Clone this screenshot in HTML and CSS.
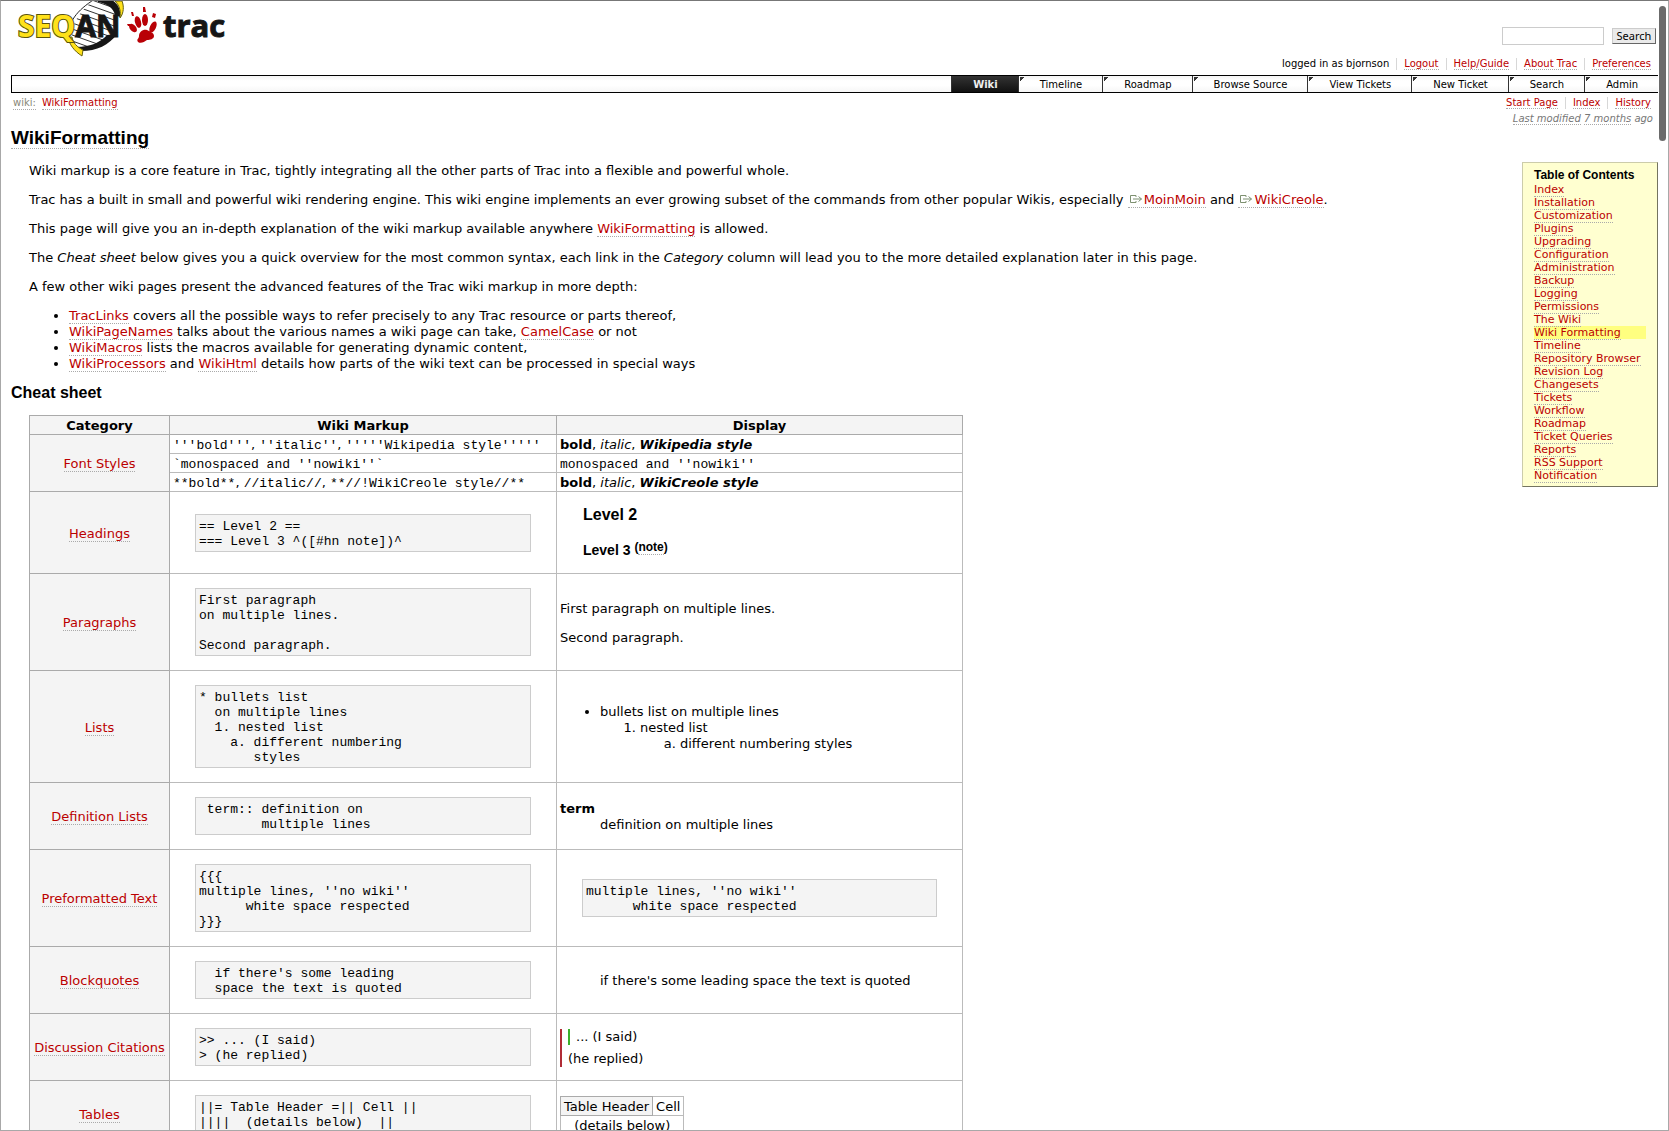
FILE: index.html
```html
<!DOCTYPE html>
<html lang="en">
<head>
<meta charset="utf-8">
<title>WikiFormatting – SeqAn</title>
<link rel="stylesheet" href="styles.css">
</head>
<body>
<div class="window">
  <div class="scrollbar" aria-hidden="true"></div>
  <header class="banner">
    <a class="logo" href="#" aria-label="SeqAn Trac home">
      <svg width="220" height="58" viewBox="0 0 220 58">
        <defs>
          <clipPath id="helix"><path d="M84 -2H104C108 8 106 28 100 38C92 46 80 48 68 46C56 40 58 18 84 -2Z"/></clipPath>
        </defs>
        <g clip-path="url(#helix)" stroke="#333" stroke-width="1" fill="none">
          <path d="M50 -12L120 13M50 -6L120 19M50 0L120 25M50 6L120 31M50 12L120 37M50 18L120 43M50 24L120 49M50 30L120 55M50 36L120 61"/>
        </g>
        <path d="M84 -2C66 9 56 22 58 36" fill="none" stroke="#222" stroke-width="1"/>
        <path d="M87 -1L101 -1C107 3 110 8 109 16L104 14C102 6 96 3 87 1Z" fill="#161616"/>
        <path d="M106 33C98 44 86 50 70 50L65 46C80 46 90 41 96 34Z" fill="#161616"/>
        <path d="M104 0C109 5 110 11 109 17C113 12 113 5 111 0Z" fill="#ffe11a" stroke="#66600c"/>
        <path d="M57 36C58 43 63 50 71 55L72 49C66 46 62 42 61 36Z" fill="#ffe11a" stroke="#66600c"/>
        <text class="logo-name" x="7" y="36"><tspan class="logo-seq">SEQ</tspan><tspan class="logo-an">AN</tspan></text>
        <g fill="#b90006">
          <path d="M128 35C128 31 132 28 136 29C140 31 143 32 143 35C143 38 139 39 136 39C133 41 130 43 127 41C125 38 128 38 128 35Z"/>
          <ellipse cx="122" cy="27" rx="3" ry="5" transform="rotate(-40 122 27)"/>
          <ellipse cx="127" cy="21" rx="3" ry="6" transform="rotate(-15 127 21)"/>
          <ellipse cx="134" cy="19" rx="3" ry="6"/>
          <ellipse cx="142" cy="26" rx="3" ry="6" transform="rotate(25 142 26)"/>
          <path d="M120 11l2 0 1 4-2 0zM132 6l2 0 1 5-3 0zM142 12l3 1-1 4-3-1zM116 23l3 0 0 2-2 0z"/>
        </g>
        <text class="logo-trac" x="152" y="36">trac</text>
      </svg>
    </a>
    <div class="tools">
      <form class="search" action="#">
        <input type="text" class="search-field" aria-label="Search this site">
        <button type="button" class="search-button">Search</button>
      </form>
      <ul class="links">
        <li>logged in as bjornson</li>
        <li><a href="#">Logout</a></li>
        <li><a href="#">Help/Guide</a></li>
        <li><a href="#">About Trac</a></li>
        <li><a href="#">Preferences</a></li>
      </ul>
    </div>
  </header>

  <nav class="mainnav">
    <a class="tab active" href="#">Wiki</a>
    <a class="tab" href="#">Timeline</a>
    <a class="tab" href="#">Roadmap</a>
    <a class="tab" href="#">Browse Source</a>
    <a class="tab" href="#">View Tickets</a>
    <a class="tab" href="#">New Ticket</a>
    <a class="tab" href="#">Search</a>
    <a class="tab" href="#">Admin</a>
  </nav>

  <div class="context">
    <div class="path"><a class="muted" href="#">wiki:</a> <a href="#">WikiFormatting</a></div>
    <div class="context-side">
      <ul class="links">
        <li><a href="#">Start Page</a></li>
        <li><a href="#">Index</a></li>
        <li><a href="#">History</a></li>
      </ul>
      <div class="modified"><a href="#">Last modified</a> <a href="#">7 months</a> ago</div>
    </div>
  </div>

  <h1><a class="plain" href="#">WikiFormatting</a></h1>

  <div class="body">
    <main class="wiki">
      <div class="text">
        <p>Wiki markup is a core feature in Trac, tightly integrating all the other parts of Trac into a flexible and powerful whole.</p>
        <p>Trac has a built in small and powerful wiki rendering engine. This wiki engine implements an ever growing subset of the commands from other popular Wikis, especially <a href="#"><svg class="ext" width="15" height="10" viewBox="0 0 15 10"><path d="M8 1.500H2.500V8.500H8V7M8 3V1.500M5 5H13.500M10.500 2.500L13.500 5L10.500 7.500" fill="none" stroke="#7d9070"/></svg>MoinMoin</a> and <a href="#"><svg class="ext" width="15" height="10" viewBox="0 0 15 10"><path d="M8 1.500H2.500V8.500H8V7M8 3V1.500M5 5H13.500M10.500 2.500L13.500 5L10.500 7.500" fill="none" stroke="#7d9070"/></svg>WikiCreole</a>.</p>
        <p>This page will give you an in-depth explanation of the wiki markup available anywhere <a href="#">WikiFormatting</a> is allowed.</p>
        <p>The <em>Cheat sheet</em> below gives you a quick overview for the most common syntax, each link in the <em>Category</em> column will lead you to the more detailed explanation later in this page.</p>
        <p>A few other wiki pages present the advanced features of the Trac wiki markup in more depth:</p>
        <ul>
          <li><a href="#">TracLinks</a> covers all the possible ways to refer precisely to any Trac resource or parts thereof,</li>
          <li><a href="#">WikiPageNames</a> talks about the various names a wiki page can take, <a href="#">CamelCase</a> or not</li>
          <li><a href="#">WikiMacros</a> lists the macros available for generating dynamic content,</li>
          <li><a href="#">WikiProcessors</a> and <a href="#">WikiHtml</a> details how parts of the wiki text can be processed in special ways</li>
        </ul>
      </div>
      <h2>Cheat sheet</h2>
      <table class="sheet">
        <colgroup><col class="col-category"><col class="col-markup"><col class="col-display"></colgroup>
        <thead>
          <tr><th scope="col">Category</th><th scope="col">Wiki Markup</th><th scope="col">Display</th></tr>
        </thead>
        <tbody>
          <tr>
            <th class="category" scope="row" rowspan="3"><a href="#">Font Styles</a></th>
            <td><code>'''bold'''</code>, <code>''italic''</code>, <code>'''''Wikipedia style'''''</code></td>
            <td><strong>bold</strong>, <em>italic</em>, <strong><em>Wikipedia style</em></strong></td>
          </tr>
          <tr>
            <td><code>`monospaced and ''nowiki''`</code></td>
            <td><code>monospaced and ''nowiki''</code></td>
          </tr>
          <tr>
            <td><code>**bold**</code>, <code>//italic//</code>, <code>**//!WikiCreole style//**</code></td>
            <td><strong>bold</strong>, <em>italic</em>, <strong><em>WikiCreole style</em></strong></td>
          </tr>
          <tr>
            <th class="category" scope="row"><a href="#">Headings</a></th>
            <td><pre>== Level 2 ==
=== Level 3 ^([#hn note])^</pre></td>
            <td><div class="sample-headings"><h2>Level 2</h2><h3>Level 3 <sup>(<a class="plain" href="#">note</a>)</sup></h3></div></td>
          </tr>
          <tr>
            <th class="category" scope="row"><a href="#">Paragraphs</a></th>
            <td><pre>First paragraph
on multiple lines.

Second paragraph.</pre></td>
            <td><p>First paragraph on multiple lines.</p><p>Second paragraph.</p></td>
          </tr>
          <tr>
            <th class="category" scope="row"><a href="#">Lists</a></th>
            <td><pre>* bullets list
  on multiple lines
  1. nested list
    a. different numbering
       styles</pre></td>
            <td><ul><li>bullets list on multiple lines<ol><li>nested list<ol class="alpha"><li>different numbering styles</li></ol></li></ol></li></ul></td>
          </tr>
          <tr>
            <th class="category" scope="row"><a href="#">Definition Lists</a></th>
            <td><pre> term:: definition on
        multiple lines</pre></td>
            <td><dl><dt>term</dt><dd>definition on multiple lines</dd></dl></td>
          </tr>
          <tr>
            <th class="category" scope="row"><a href="#">Preformatted Text</a></th>
            <td><pre>{{{
multiple lines, ''no wiki''
      white space respected
}}}</pre></td>
            <td><pre>multiple lines, ''no wiki''
      white space respected</pre></td>
          </tr>
          <tr>
            <th class="category" scope="row"><a href="#">Blockquotes</a></th>
            <td><pre>  if there's some leading
  space the text is quoted</pre></td>
            <td><blockquote>if there's some leading space the text is quoted</blockquote></td>
          </tr>
          <tr>
            <th class="category" scope="row"><a href="#">Discussion Citations</a></th>
            <td><pre>&gt;&gt; ... (I said)
&gt; (he replied)</pre></td>
            <td><blockquote class="citation"><blockquote class="citation inner">... (I said)</blockquote>(he replied)</blockquote></td>
          </tr>
          <tr>
            <th class="category" scope="row"><a href="#">Tables</a></th>
            <td><pre>||= Table Header =|| Cell ||
||||  (details below)  ||</pre></td>
            <td><table class="sample-table"><tr><th scope="col">Table Header</th><td>Cell</td></tr><tr><td colspan="2">(details below)</td></tr></table></td>
          </tr>
        </tbody>
      </table>
    </main>

    <aside class="toc">
      <h4>Table of Contents</h4>
      <ul>
        <li><a href="#">Index</a></li>
        <li><a href="#">Installation</a></li>
        <li><a href="#">Customization</a></li>
        <li><a href="#">Plugins</a></li>
        <li><a href="#">Upgrading</a></li>
        <li><a href="#">Configuration</a></li>
        <li><a href="#">Administration</a></li>
        <li><a href="#">Backup</a></li>
        <li><a href="#">Logging</a></li>
        <li><a href="#">Permissions</a></li>
        <li><a href="#">The Wiki</a></li>
        <li class="current"><a href="#">Wiki Formatting</a></li>
        <li><a href="#">Timeline</a></li>
        <li><a href="#">Repository Browser</a></li>
        <li><a href="#">Revision Log</a></li>
        <li><a href="#">Changesets</a></li>
        <li><a href="#">Tickets</a></li>
        <li><a href="#">Workflow</a></li>
        <li><a href="#">Roadmap</a></li>
        <li><a href="#">Ticket Queries</a></li>
        <li><a href="#">Reports</a></li>
        <li><a href="#">RSS Support</a></li>
        <li><a href="#">Notification</a></li>
      </ul>
    </aside>
  </div>
</div>
</body>
</html>
```
FILE: styles.css
```css
* { box-sizing: border-box; }

body {
  margin: 0;
  background: #fff;
  color: #000;
  font: 13px/16px Verdana, "DejaVu Sans", sans-serif;
}

.window {
  position: relative;
  height: 100vh;
  overflow: hidden;
  padding: 0 10px;
  border: 1px solid #a8a8a8;
  border-top-color: #777;
}

.scrollbar {
  position: absolute;
  top: 5px;
  right: 2px;
  width: 7px;
  height: 135px;
  border-radius: 4px;
  background: #6b6b6b;
}

a {
  color: #b00;
  text-decoration: none;
  border-bottom: 1px dotted #aaa;
}

a.plain { color: inherit; }
a.muted { color: #888877; }

ul, ol, dl, p, h1, h2, h3, h4, pre, blockquote { margin: 0; padding: 0; }

h1, h2, h3, h4 { font-family: Arial, "Liberation Sans", sans-serif; font-weight: bold; }

/* Header */
.banner {
  display: flex;
  justify-content: space-between;
  height: 74px;
}

.logo { border: 0; }
.logo svg { display: block; }
.logo-name { font: bold 30px "Open Sans", sans-serif; }
.logo-seq { fill: #ffe11a; stroke: #5a540c; stroke-width: 2px; paint-order: stroke; }
.logo-an { fill: #161616; stroke: #161616; stroke-width: 1px; }
.logo-trac { font: bold 31px "Open Sans", sans-serif; fill: #161616; stroke: #161616; stroke-width: 1px; }

.tools {
  display: flex;
  flex-direction: column;
  align-items: flex-end;
  padding-top: 26px;
}

.search {
  display: flex;
  align-items: center;
  gap: 8px;
  margin-right: 2px;
}

.search-field {
  width: 102px;
  height: 18px;
  padding: 0 3px;
  border: 1px solid #ccc;
  background: #fff;
  font: inherit;
}

.search-button {
  width: 44px;
  height: 16px;
  padding: 0;
  border: 1px solid;
  border-color: #ccc #666 #666 #ccc;
  background: #eaeaea;
  color: #000;
  font: 11px/12px "Noto Sans", sans-serif;
}

.links {
  display: flex;
  list-style: none;
  font-size: 10px;
  line-height: 12px;
}

.links li { padding: 0 7px; }
.links li + li { border-left: 1px solid #d7d7d7; }

.tools .links { margin-top: 13px; }

/* Main navigation */
.mainnav {
  display: flex;
  justify-content: flex-end;
  border: 1px solid #000;
  border-right: 0;
  background: linear-gradient(#f4f4f4, #fff 30%, #fff 60%, #f6f6f6);
  font-size: 10px;
  line-height: 14px;
}

.tab {
  padding: 2px 20px 0 21px;
  border: 0;
  border-left: 1px solid #333;
  background: linear-gradient(135deg, #333 0, #333 3px, transparent 3px) 1px 1px / 5px 5px no-repeat;
  color: #000;
}

.tab.active {
  background: linear-gradient(#333, #111);
  color: #eee;
  font-weight: bold;
}

/* Breadcrumb and page links */
.context {
  display: flex;
  justify-content: space-between;
  padding: 4px 0 0 2px;
  font-size: 10px;
  line-height: 12px;
}

.path { display: flex; align-items: flex-start; gap: 6px; }

.context-side {
  display: flex;
  flex-direction: column;
  align-items: flex-end;
  gap: 4px;
}

.modified { padding-right: 5px; color: #777; font-style: italic; }
.modified a { color: inherit; }

h1 { margin: 3px 0 14px; font-size: 19px; line-height: 20px; }

/* Article */
.body { display: flex; align-items: flex-start; }
.wiki { flex: 1; }
.text { margin-left: 18px; padding-top: 1px; }
.text p { margin-bottom: 13px; }
.text ul { margin-bottom: 12px; padding-left: 40px; }
.ext { margin-right: 1px; }

h2 { font-size: 16px; line-height: 18px; }
h3 { font-size: 14px; line-height: 16px; }

.wiki > h2 { margin-bottom: 13px; }

code, pre { font-family: "Courier New", "Liberation Mono", monospace; font-size: 13px; }
code { line-height: 15px; }

/* Cheat sheet */
.sheet {
  width: 934px;
  margin-left: 18px;
  table-layout: fixed;
  border-collapse: collapse;
}

.col-category { width: 140px; }
.col-markup { width: 387px; }

.sheet th, .sheet td { padding: 2px 3px 0; border: 1px solid #bbb; white-space: nowrap; }
.sheet th { border-color: #aaa; background: #f4f4f4; }
.sheet .category { font-weight: normal; padding: 2px 0 0; }

.sheet pre {
  margin: 12px 22px 14px;
  padding: 4px 3px 2px;
  border: 1px solid #ccc;
  background: #f4f4f4;
  line-height: 15px;
}

.sheet p + p { margin-top: 13px; }
.sheet ul, .sheet ol { padding-left: 40px; }
.alpha { list-style-type: lower-alpha; }
.sheet dt { font-weight: bold; }
.sheet dd { margin-left: 40px; }
.sheet blockquote { margin-left: 40px; }

.sample-headings {
  display: flex;
  flex-direction: column;
  gap: 17px;
  padding: 12px 23px 15px;
}

sup { font-size: 12px; line-height: 12px; vertical-align: 4px; }

.sheet .citation {
  margin: 0;
  padding-left: 6px;
  border-left: 2px solid #b02c36;
}

.sheet .citation.inner { margin-bottom: 6px; border-color: #3cb02c; }

.sample-table { border-collapse: collapse; }
.sheet .sample-table th { font-weight: normal; }
.sheet .sample-table td[colspan] { text-align: center; }

/* Table of contents */
.toc {
  min-width: 136px;
  padding: 5px 11px 4px;
  border: 1px solid;
  border-color: #ccccaa #747460 #747460 #ccccaa;
  background: #ffffd0;
  font-size: 11px;
  line-height: 13px;
  white-space: nowrap;
}

.toc h4 { font-size: 12px; line-height: 15px; }
.toc ul { list-style: none; }
.toc .current { background: #ffff80; }
```
